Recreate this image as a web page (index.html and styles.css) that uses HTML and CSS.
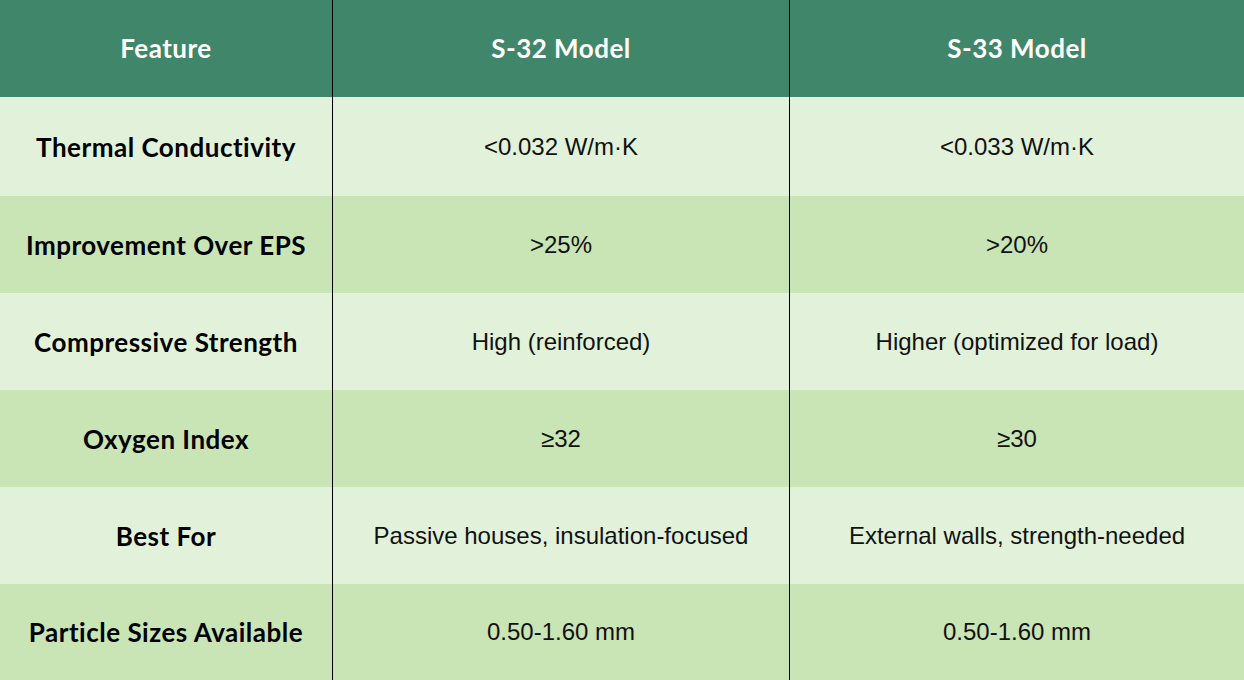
FILE: index.html
```html
<!DOCTYPE html>
<html>
<head>
<meta charset="utf-8">
<link rel="stylesheet" href="styles.css">
</head>
<body>
<div class="table">
  <div class="cell head">Feature</div>
  <div class="cell head line">S-32 Model</div>
  <div class="cell head line">S-33 Model</div>

  <div class="cell label light">Thermal Conductivity</div>
  <div class="cell val light line">&lt;0.032 W/m·K</div>
  <div class="cell val light line">&lt;0.033 W/m·K</div>

  <div class="cell label dark">Improvement Over EPS</div>
  <div class="cell val dark line">&gt;25%</div>
  <div class="cell val dark line">&gt;20%</div>

  <div class="cell label light">Compressive Strength</div>
  <div class="cell val light line">High (reinforced)</div>
  <div class="cell val light line">Higher (optimized for load)</div>

  <div class="cell label dark">Oxygen Index</div>
  <div class="cell val dark line">≥32</div>
  <div class="cell val dark line">≥30</div>

  <div class="cell label light">Best For</div>
  <div class="cell val light line">Passive houses, insulation-focused</div>
  <div class="cell val light line">External walls, strength-needed</div>

  <div class="cell label dark">Particle Sizes Available</div>
  <div class="cell val dark line">0.50-1.60 mm</div>
  <div class="cell val dark line">0.50-1.60 mm</div>
</div>
</body>
</html>
```
FILE: styles.css
```css
html, body {
  margin: 0;
  padding: 0;
}
body {
  width: 1244px;
  height: 680px;
  overflow: hidden;
}
.table {
  display: grid;
  grid-template-columns: 332px 457px 455px;
  grid-template-rows: 97px 99px 97px 97px 97px 97px 96px;
  height: 680px;
}
.cell {
  display: flex;
  align-items: center;
  justify-content: center;
  text-align: center;
}
.line {
  border-left: 1px solid #000;
}
.head {
  background: #40866a;
  color: #ffffff;
  font-family: Lato, "Open Sans", sans-serif;
  font-weight: 700;
  font-size: 26px;
  letter-spacing: 0.5px;
  padding-bottom: 1px;
}
.label {
  font-family: Lato, "Open Sans", sans-serif;
  font-weight: 700;
  font-size: 26px;
  letter-spacing: 0.5px;
  color: #000;
}
.val {
  font-family: "Liberation Sans", Arial, sans-serif;
  font-size: 24px;
  color: #111;
}
.light {
  background: #e2f2da;
}
.dark {
  background: #c9e4b5;
}
```
